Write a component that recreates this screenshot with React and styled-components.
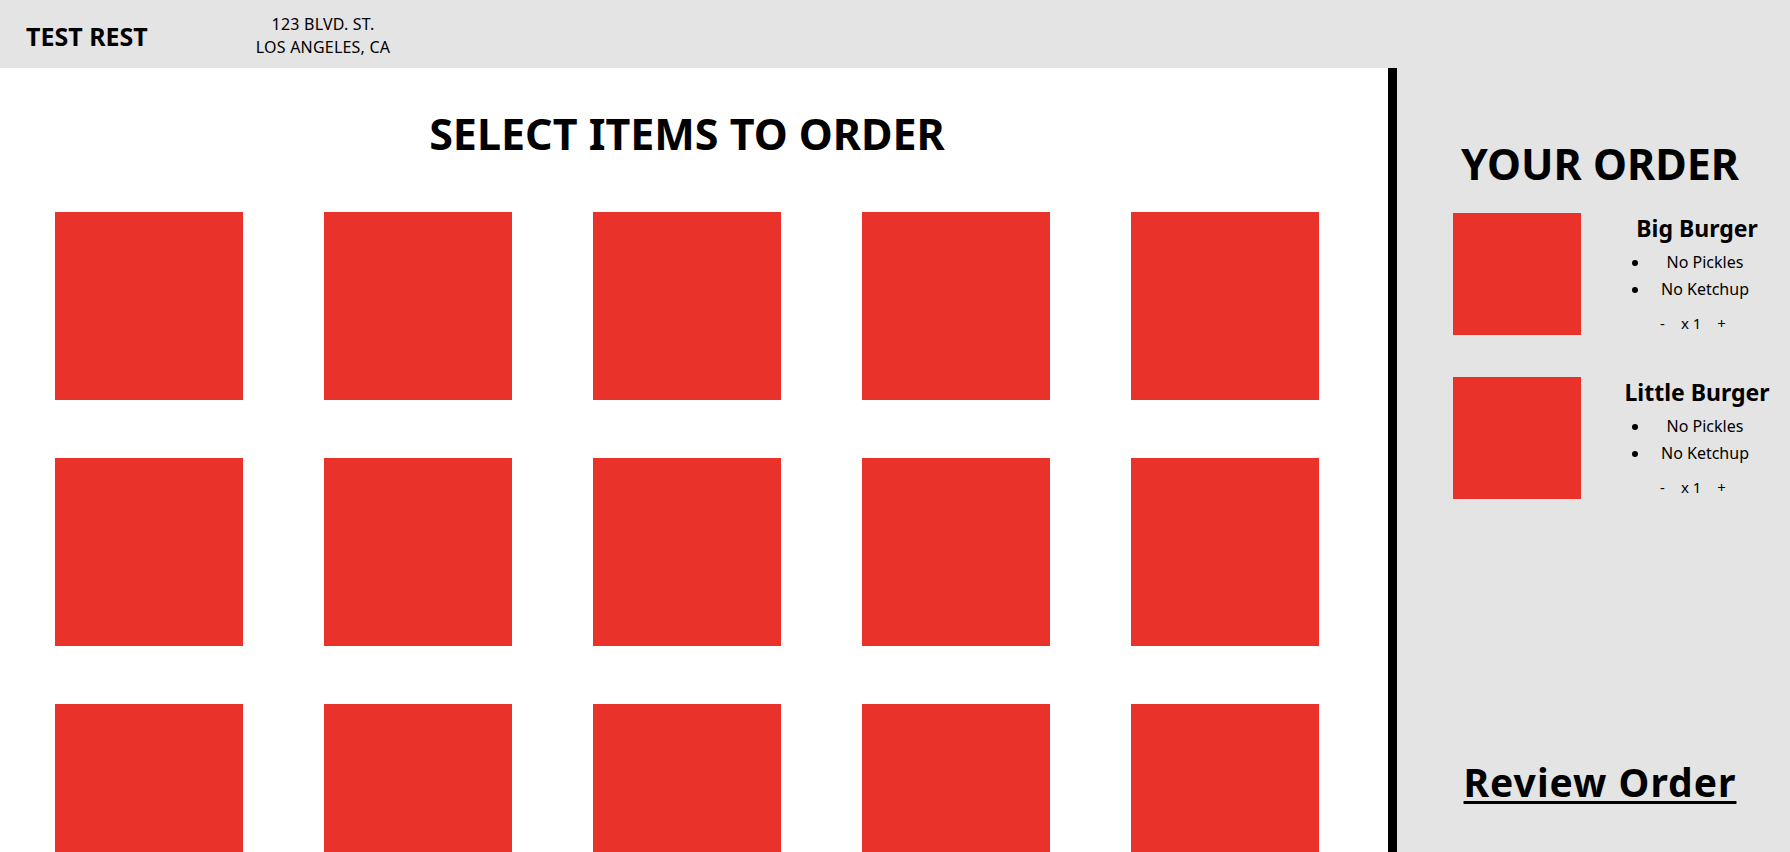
import styled, { createGlobalStyle } from "styled-components";

const GlobalStyle = createGlobalStyle`
  html, body {
    margin: 0;
    padding: 0;
  }
  body {
    font-family: "Noto Sans", "Open Sans", sans-serif;
    color: #000;
    overflow: hidden;
  }
`;

const RED = "#e9332a";
const GRAY = "#e3e4e3";

const menu = Array.from({ length: 15 }, (_, i) => i);

const order = [
  { name: "Big Burger", notes: ["No Pickles", "No Ketchup"], qty: 1 },
  { name: "Little Burger", notes: ["No Pickles", "No Ketchup"], qty: 1 },
];

const App = () => {
  return (
    <>
      <GlobalStyle />
      <Page>
        <Header>
          <Brand>TEST REST</Brand>
          <Address>
            123 BLVD. ST.
            <br />
            LOS ANGELES, CA
          </Address>
        </Header>
        <Body>
          <Main>
            <Title>SELECT ITEMS TO ORDER</Title>
            <Grid>
              {menu.map((i) => (
                <Tile key={i} />
              ))}
            </Grid>
          </Main>
          <Sidebar>
            <SideTitle>YOUR ORDER</SideTitle>
            <OrderList>
              {order.map((item) => (
                <OrderItem key={item.name}>
                  <Thumb />
                  <Details>
                    <ItemName>{item.name}</ItemName>
                    <Notes>
                      {item.notes.map((n) => (
                        <Note key={n}>{n}</Note>
                      ))}
                    </Notes>
                    <Qty>
                      <span>-</span>
                      <span>x{" "}{item.qty}</span>
                      <span>+</span>
                    </Qty>
                  </Details>
                </OrderItem>
              ))}
            </OrderList>
            <Review href="#">Review Order</Review>
          </Sidebar>
        </Body>
      </Page>
    </>
  );
};

const Page = styled.div`
  width: 1790px;
  height: 852px;
  display: flex;
  flex-direction: column;
  overflow: hidden;
`;

const Header = styled.header`
  height: 68px;
  flex-shrink: 0;
  background: ${GRAY};
  display: flex;
  align-items: center;
  padding-left: 26px;
`;

const Brand = styled.div`
  width: 197px;
  font-size: 25px;
  font-weight: 700;
  line-height: 1;
  padding-top: 4px;
`;

const Address = styled.div`
  width: 200px;
  text-align: center;
  font-size: 16px;
  letter-spacing: 0.2px;
  line-height: 23px;
  padding-top: 4px;
`;

const Body = styled.div`
  flex: 1;
  display: flex;
  min-height: 0;
`;

const Main = styled.main`
  width: 1388px;
  background: #fff;
  padding-top: 40px;
  box-sizing: border-box;
`;

const Title = styled.h1`
  margin: 0;
  padding-right: 14px;
  font-size: 43px;
  line-height: 1.2;
  font-weight: 700;
  text-align: center;
`;

const Grid = styled.div`
  display: grid;
  grid-template-columns: repeat(5, 188px);
  column-gap: 81px;
  row-gap: 58px;
  padding-left: 55px;
  margin-top: 52px;
`;

const Tile = styled.div`
  height: 188px;
  background: ${RED};
`;

const Sidebar = styled.aside`
  flex: 1;
  background: ${GRAY};
  border-left: 9px solid #000;
  display: flex;
  flex-direction: column;
  padding-top: 70px;
  padding-bottom: 46px;
`;

const SideTitle = styled.h2`
  margin: 0;
  padding-left: 13px;
  font-size: 43px;
  line-height: 1.2;
  font-weight: 700;
  text-align: center;
`;

const OrderList = styled.div`
  display: flex;
  flex-direction: column;
  gap: 42px;
  margin-top: 23px;
  padding-left: 56px;
`;

const OrderItem = styled.div`
  display: flex;
  gap: 26px;
`;

const Thumb = styled.div`
  width: 128px;
  height: 122px;
  flex-shrink: 0;
  background: ${RED};
`;

const Details = styled.div`
  width: 180px;
  text-align: center;
  padding-top: 2px;
`;

const ItemName = styled.div`
  font-size: 23px;
  font-weight: 700;
  line-height: 1.2;
  white-space: nowrap;
`;

const Notes = styled.ul`
  margin: 7px 0 0 43px;
  padding: 0;
  width: 110px;
  list-style: disc outside;
`;

const Note = styled.li`
  font-size: 16px;
  line-height: 27px;
  text-align: center;
`;

const Qty = styled.div`
  display: flex;
  justify-content: center;
  gap: 16px;
  margin-top: 10px;
  padding-right: 8px;
  font-size: 15px;
  line-height: 20px;
`;

const Review = styled.a`
  margin-top: auto;
  padding-left: 13px;
  align-self: center;
  font-size: 39px;
  letter-spacing: 1px;
  line-height: 1.2;
  font-weight: 700;
  color: #000;
  text-decoration: underline;
  text-decoration-thickness: 3px;
  text-underline-offset: 4px;
`;

export default App;
